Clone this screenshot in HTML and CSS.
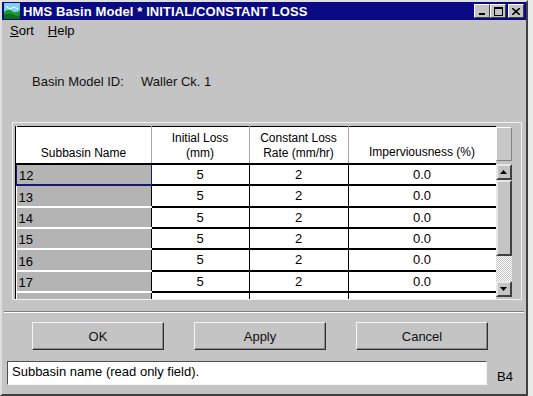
FILE: index.html
```html
<!DOCTYPE html>
<html lang="en">
<head>
    <meta charset="UTF-8">
    <title>HMS Basin Model * INITIAL/CONSTANT LOSS</title>
    <link rel="stylesheet" href="styles.css">
</head>
<body>

<div class="window">
    <div class="titlebar">
        <svg class="app-icon" width="16" height="16" viewBox="0 0 16 16">
            <rect x="0" y="0" width="16" height="16" fill="#7fd0f0"/>
            <path d="M0 9 Q4 5 8 8 T16 7 V16 H0 Z" fill="#1a9a2a"/>
            <path d="M0 12 Q5 9 10 12 T16 11 V16 H0 Z" fill="#0c6e1a"/>
            <path d="M2 3 L6 6 L10 4 L14 6" stroke="#ffffff" stroke-width="1" fill="none"/>
        </svg>
        <span class="title">HMS Basin Model * INITIAL/CONSTANT LOSS</span>
        <div class="caption-buttons">
            <span class="cap-btn"><svg width="8" height="7" viewBox="0 0 8 7"><rect x="1" y="5" width="6" height="2" fill="#000"/></svg></span>
            <span class="cap-btn"><svg width="9" height="9" viewBox="0 0 9 9"><rect x="0.5" y="0.5" width="8" height="8" fill="none" stroke="#000"/><rect x="0" y="0" width="9" height="2" fill="#000"/></svg></span>
            <span class="cap-btn close"><svg width="8" height="7" viewBox="0 0 8 7"><path d="M0 0 L8 7 M8 0 L0 7" stroke="#000" stroke-width="1.6"/></svg></span>
        </div>
    </div>

    <div class="menubar">
        <span class="menu-item"><u>S</u>ort</span>
        <span class="menu-item"><u>H</u>elp</span>
    </div>

    <div class="model-id">
        <span class="label">Basin Model ID:</span>
        <span class="value">Waller Ck. 1</span>
    </div>

    <div class="grid-frame">
        <div class="grid">
            <table class="loss-table">
                <thead>
                    <tr>
                        <th class="col-name">Subbasin Name</th>
                        <th class="col-init">Initial Loss<br>(mm)</th>
                        <th class="col-rate">Constant Loss<br>Rate (mm/hr)</th>
                        <th class="col-imp">Imperviousness (%)</th>
                    </tr>
                </thead>
                <tbody>
                    <tr class="selected"><td class="name">12</td><td>5</td><td>2</td><td>0.0</td></tr>
                    <tr><td class="name">13</td><td>5</td><td>2</td><td>0.0</td></tr>
                    <tr><td class="name">14</td><td>5</td><td>2</td><td>0.0</td></tr>
                    <tr><td class="name">15</td><td>5</td><td>2</td><td>0.0</td></tr>
                    <tr><td class="name">16</td><td>5</td><td>2</td><td>0.0</td></tr>
                    <tr><td class="name">17</td><td>5</td><td>2</td><td>0.0</td></tr>
                    <tr class="partial"><td class="name"></td><td></td><td></td><td></td></tr>
                </tbody>
            </table>
            <div class="scrollbar">
                <div class="scroll-corner"></div>
                <div class="scroll-btn"><svg width="7" height="4" viewBox="0 0 7 4"><path d="M3.5 0 L7 4 H0 Z" fill="#000"/></svg></div>
                <div class="scroll-thumb"></div>
                <div class="scroll-track"></div>
                <div class="scroll-btn"><svg width="7" height="4" viewBox="0 0 7 4"><path d="M0 0 H7 L3.5 4 Z" fill="#000"/></svg></div>
            </div>
        </div>
    </div>

    <div class="separator"></div>

    <div class="buttons">
        <button class="btn">OK</button>
        <button class="btn">Apply</button>
        <button class="btn">Cancel</button>
    </div>

    <div class="status-row">
        <div class="status">Subbasin name (read only field).</div>
        <span class="cell-ref">B4</span>
    </div>
</div>

</body>
</html>
```

FILE: styles.css
```css
/* Общие стили */
body {
    margin: 0;
    background-color: #e8ece8;
    font-family: "Liberation Sans", Arial, sans-serif;
    font-size: 12px;
    color: #000;
    overflow: hidden;
}

.window {
    width: 524px;
    height: 392px;
    background-color: #c4c4c4;
    border: 2px solid;
    border-color: #dfdfdf #404040 #404040 #dfdfdf;
    box-sizing: content-box;
}

/* Заголовок окна */
.titlebar {
    height: 18px;
    background-color: #0a0a84;
    display: flex;
    align-items: center;
    padding-left: 2px;
    color: #fff;
}

.app-icon {
    flex-shrink: 0;
    margin-right: 3px;
}

.title {
    font-weight: bold;
    font-size: 13px;
    letter-spacing: 0.1px;
    flex: 1;
    white-space: nowrap;
}

.caption-buttons {
    display: flex;
    margin-right: 2px;
}

.cap-btn {
    width: 16px;
    height: 14px;
    background-color: #c4c4c4;
    box-sizing: border-box;
    border: 1px solid;
    border-color: #fff #404040 #404040 #fff;
    display: flex;
    align-items: center;
    justify-content: center;
}

.cap-btn.close {
    margin-left: 2px;
}

/* Меню */
.menubar {
    height: 20px;
    display: flex;
    align-items: center;
    padding-left: 8px;
    gap: 14px;
    font-size: 13px;
}

.model-id {
    margin-top: 33px;
    height: 16px;
    display: flex;
    align-items: center;
    padding-left: 30px;
    font-size: 13px;
    color: #111;
}

.model-id .label {
    width: 109px;
}

/* Таблица */
.grid-frame {
    margin: 33px 0 0 10px;
    width: 510px;
    height: 178px;
    border: 1px solid #f0f0f0;
    box-sizing: border-box;
    padding: 3px 0 0 2px;
}

.grid {
    display: flex;
    height: 173px;
    overflow: hidden;
    border-left: 1px solid #000;
}

.loss-table {
    border-collapse: collapse;
    table-layout: fixed;
    width: 479px;
    background-color: #fff;
    font-size: 13px;
}

.loss-table th {
    height: 33px;
    padding: 0 0 2px 0;
    font-weight: normal;
    font-size: 12px;
    line-height: 15px;
    vertical-align: bottom;
    border-right: 1px solid #a8a8a8;
    border-bottom: 2px solid #000;
    border-top: 1px solid #000;
    background-color: #fff;
}

.loss-table th.col-imp {
    border-right: none;
    padding-bottom: 3px;
}

.col-name { width: 134px; }
.col-init { width: 97px; }
.col-rate { width: 98px; }
.col-imp { width: 147px; }

.loss-table td {
    height: 19px;
    padding: 0;
    text-align: center;
    border-right: 1px solid #000;
    border-bottom: 2px solid #000;
    line-height: 19px;
}

.loss-table td:last-child {
    border-right: none;
}

.loss-table td.name {
    background-color: #b4b4b4;
    text-align: left;
    padding-left: 2px;
    border-bottom-color: #fff;
    vertical-align: bottom;
    line-height: 16px;
}

.loss-table tr.selected td.name {
    border: 1px solid #1a1a6a;
    border-bottom-width: 2px;
}

.loss-table tr.partial td {
    height: 6px;
    border-bottom: none;
}

/* Полоса прокрутки */
.scrollbar {
    width: 16px;
    flex-shrink: 0;
    display: flex;
    flex-direction: column;
    background-color: #c4c4c4;
}

.scroll-corner {
    height: 32px;
    margin-top: 1px;
    margin-bottom: 3px;
    border: 1px solid;
    border-color: #fff #808080 #808080 #fff;
    background-color: #c8c8c8;
}

.scroll-btn {
    height: 16px;
    box-sizing: border-box;
    border: 2px solid;
    border-color: #e8e8e8 #404040 #404040 #e8e8e8;
    background-color: #c4c4c4;
    display: flex;
    align-items: center;
    justify-content: center;
}

.scroll-thumb {
    height: 76px;
    box-sizing: border-box;
    border: 2px solid;
    border-color: #e8e8e8 #404040 #404040 #e8e8e8;
    background-color: #c4c4c4;
}

.scroll-track {
    height: 25px;
    background-color: #dcdcdc;
    background-image: repeating-conic-gradient(#ffffff 0 25%, #c4c4c4 0 50%);
    background-size: 2px 2px;
}

/* Разделитель и кнопки */
.separator {
    margin: 11px 2px 0 2px;
    height: 0;
    border-top: 1px solid #808080;
    border-bottom: 1px solid #fff;
}

.buttons {
    display: flex;
    gap: 30px;
    padding-left: 30px;
    margin-top: 9px;
}

.btn {
    width: 132px;
    height: 28px;
    font-family: "Liberation Sans", Arial, sans-serif;
    font-size: 13px;
    color: #111;
    background-color: #c4c4c4;
    border: 1px solid;
    border-color: #f4f4f4 #303030 #303030 #f4f4f4;
    box-shadow: inset -1px -1px 0 #8a8a8a;
    padding: 0;
}

.status-row {
    display: flex;
    align-items: flex-end;
    margin-top: 11px;
    padding-left: 5px;
}

.status {
    width: 480px;
    height: 24px;
    box-sizing: border-box;
    border: 1px solid;
    border-color: #505050 #f4f4f4 #f4f4f4 #505050;
    background-color: #fff;
    font-size: 13px;
    line-height: 20px;
    padding-left: 4px;
}

.cell-ref {
    margin-left: 10px;
    font-size: 13px;
    line-height: 16px;
}
```
